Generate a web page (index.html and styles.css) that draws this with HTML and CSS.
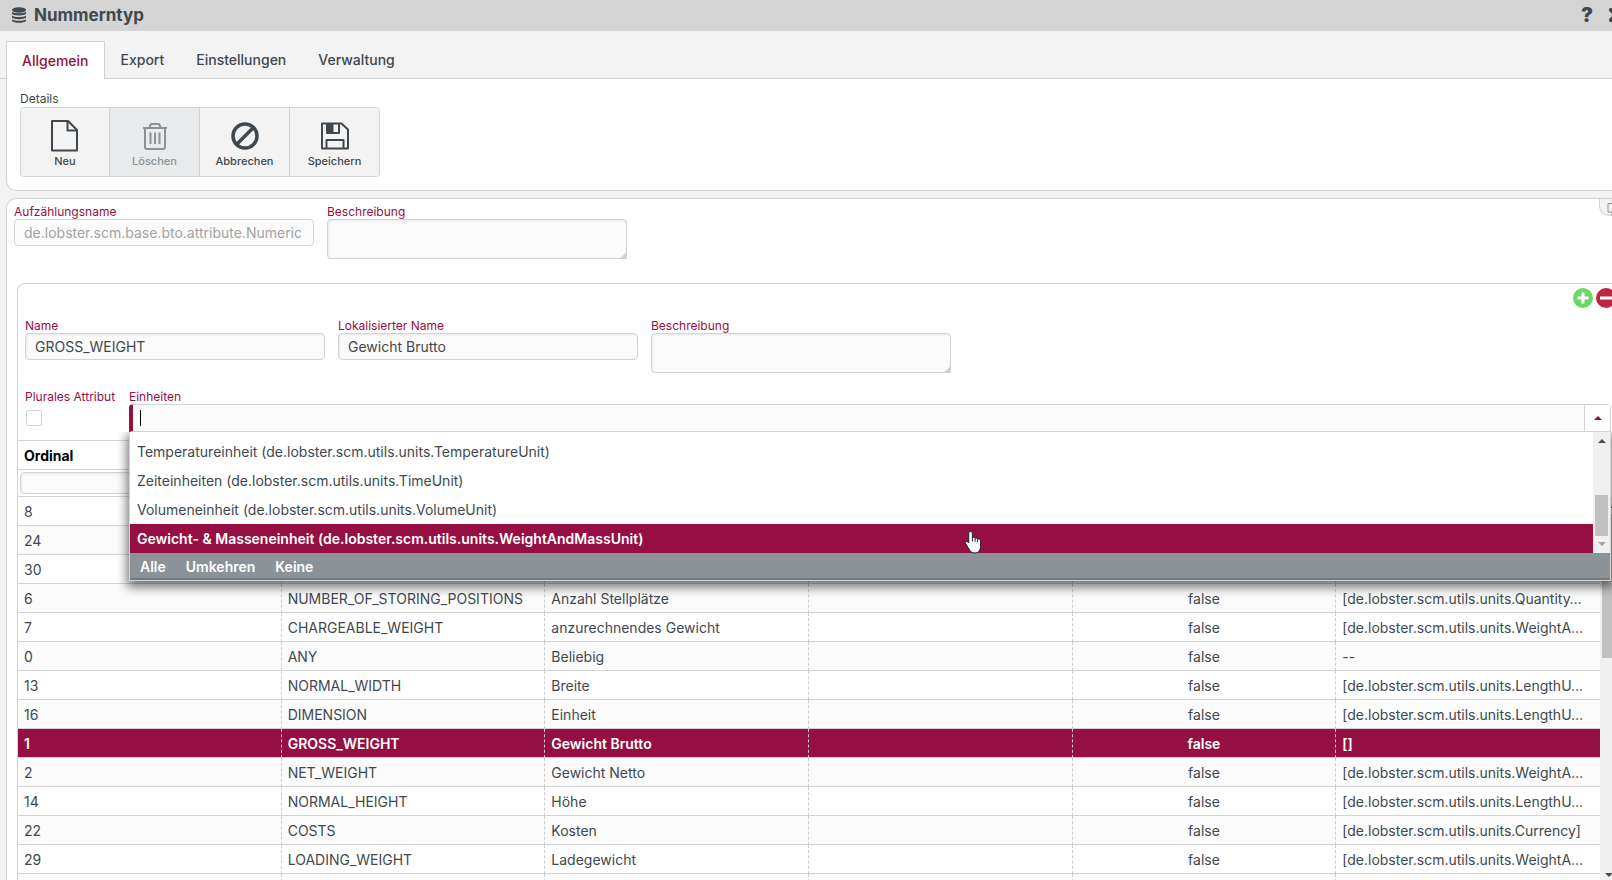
FILE: index.html
```html
<!DOCTYPE html>
<html lang="de">
<head>
  <meta charset="UTF-8">
  <meta name="viewport" content="width=device-width, initial-scale=1.0">
  <title>Nummerntyp</title>
  <link rel="stylesheet" href="styles.css">
</head>
<body>
<div class="window">
  <header class="titlebar">
    <svg class="db-icon" viewBox="0 0 14 16" width="14" height="16">
      <ellipse cx="7" cy="3" rx="7" ry="2.8"/>
      <path d="M0 4.800c2 2 12 2 14 0v2c-1.500 2.200-12.500 2.200-14 0zM0 8.500c2 2 12 2 14 0v2c-1.500 2.200-12.500 2.200-14 0zM0 12.200c2 2 12 2 14 0v1.500c-1.500 2.800-12.500 2.800-14 0z"/>
    </svg>
    <h1>Nummerntyp</h1>
    <button class="title-btn" aria-label="Hilfe">?</button>
    <button class="title-btn close" aria-label="Schließen">
      <svg viewBox="0 0 14 14" width="14" height="14"><path d="M2 2l10 10M12 2L2 12" stroke-width="4" stroke-linecap="round"/></svg>
    </button>
  </header>

  <nav class="tabs">
    <a href="#" class="tab active">Allgemein</a>
    <a href="#" class="tab">Export</a>
    <a href="#" class="tab">Einstellungen</a>
    <a href="#" class="tab">Verwaltung</a>
  </nav>

  <section class="toolbar">
    <div class="group-title">Details</div>
    <div class="btn-group">
      <button>
        <svg viewBox="0 0 34 34" width="34" height="34"><path d="M4 2h16l9 9v20.500h-25zM19.500 2v9.500h9.500" /></svg>
        Neu
      </button>
      <button disabled>
        <svg viewBox="0 0 34 34" width="34" height="34"><path d="M5 9h24M7 9h20v19q0 2-2 2h-16q-2 0-2-2zM11 9l2-4h8l2 4M12.500 13.500v11.500M17 13.500v11.500M21.500 13.500v11.500"/></svg>
        Löschen
      </button>
      <button>
        <svg viewBox="0 0 34 34" width="34" height="34"><circle cx="17" cy="17" r="12" stroke-width="3.500"/><path d="M8.500 25.500l17-17" stroke-width="3.500"/></svg>
        Abbrechen
      </button>
      <button>
        <svg viewBox="0 0 34 34" width="34" height="34"><path d="M4 4.500h19.500l6.500 6v19h-26zM9 4.500v9.500h12v-9.500M8.500 29.500v-8.500h17v8.500"/><path class="solid" d="M9 4h6.500v9.500H9z"/></svg>
        Speichern
      </button>
    </div>
  </section>

  <section class="content">
    <button class="corner-btn" aria-label="Ansicht">
      <svg viewBox="0 0 16 14" width="16" height="14"><path d="M1 1.500h14v8.500h-14zM4 12.500h8"/></svg>
    </button>

    <div class="fields">
      <div class="field">
        <label for="enumName">Aufzählungsname</label>
        <input id="enumName" type="text" value="de.lobster.scm.base.bto.attribute.NumericAttribute" disabled>
      </div>
      <div class="field">
        <label for="enumDesc">Beschreibung</label>
        <textarea id="enumDesc"></textarea>
      </div>
    </div>

    <div class="entry">
      <div class="entry-actions">
        <button aria-label="Hinzufügen"><svg viewBox="0 0 20 20" width="20" height="20"><circle cx="10" cy="10" r="10" fill="#6fd567"/><path d="M10 4.500v11M4.500 10h11"/></svg></button>
        <button aria-label="Entfernen"><svg viewBox="0 0 20 20" width="20" height="20"><circle cx="10" cy="10" r="10" fill="#be2742"/><path d="M4 10h12"/></svg></button>
      </div>

      <div class="fields">
        <div class="field">
          <label for="name">Name</label>
          <input id="name" type="text" value="GROSS_WEIGHT">
        </div>
        <div class="field">
          <label for="locName">Lokalisierter Name</label>
          <input id="locName" type="text" value="Gewicht Brutto">
        </div>
        <div class="field">
          <label for="desc">Beschreibung</label>
          <textarea id="desc"></textarea>
        </div>
      </div>

      <div class="fields units-row">
        <div class="field check">
          <label for="plural">Plurales Attribut</label>
          <input id="plural" type="checkbox">
        </div>
        <div class="field units">
          <label for="units">Einheiten</label>
          <div class="combo">
            <span class="caret"></span>
            <input id="units" type="text">
            <button class="combo-btn" aria-label="Liste schließen"><span class="arrow up"></span></button>
            <div class="dropdown">
              <div class="list-wrap">
                <ul class="options">
                  <li>Temperatureinheit (de.lobster.scm.utils.units.TemperatureUnit)</li>
                  <li>Zeiteinheiten (de.lobster.scm.utils.units.TimeUnit)</li>
                  <li>Volumeneinheit (de.lobster.scm.utils.units.VolumeUnit)</li>
                  <li class="selected">Gewicht- &amp; Masseneinheit (de.lobster.scm.utils.units.WeightAndMassUnit)
                    <svg class="pointer" viewBox="0 0 18 24" width="18" height="24"><path d="M6.500 1.500c1.200 0 1.900.7 1.900 1.800v4.200c1-.6 2.200-.3 2.700.6 1-.4 2-.1 2.500.8 1.700-.3 3 .4 3 2.100v5.500c0 3.500-2 6.500-5.600 6.500-3.400 0-4.600-1.500-6-4l-3.500-5.500c-.8-1.400.7-2.600 2-1.700l1.200 1.200V3.300c0-1.100.7-1.800 1.800-1.800z"/><path d="M8.400 7.500v4M11.100 8.200v3.500M13.600 9v3"/></svg>
                  </li>
                </ul>
                <div class="scrollbar">
                  <span class="arrow up"></span>
                  <div class="thumb"></div>
                  <span class="arrow down"></span>
                </div>
              </div>
              <div class="list-actions">
                <button>Alle</button>
                <button>Umkehren</button>
                <button>Keine</button>
              </div>
            </div>
          </div>
        </div>
      </div>

      <div class="grid">
        <table>
          <thead>
            <tr><th>Ordinal</th><th></th><th></th><th></th><th></th><th></th></tr>
            <tr class="filter"><td><input type="text" aria-label="Filter Ordinal"></td><td></td><td></td><td></td><td></td><td></td></tr>
          </thead>
          <tbody>
            <tr><td>8</td><td></td><td></td><td></td><td></td><td></td></tr>
            <tr><td>24</td><td></td><td></td><td></td><td></td><td></td></tr>
            <tr><td>30</td><td></td><td></td><td></td><td></td><td></td></tr>
            <tr><td>6</td><td>NUMBER_OF_STORING_POSITIONS</td><td>Anzahl Stellplätze</td><td></td><td>false</td><td>[de.lobster.scm.utils.units.Quantity…</td></tr>
            <tr><td>7</td><td>CHARGEABLE_WEIGHT</td><td>anzurechnendes Gewicht</td><td></td><td>false</td><td>[de.lobster.scm.utils.units.WeightA…</td></tr>
            <tr><td>0</td><td>ANY</td><td>Beliebig</td><td></td><td>false</td><td>--</td></tr>
            <tr><td>13</td><td>NORMAL_WIDTH</td><td>Breite</td><td></td><td>false</td><td>[de.lobster.scm.utils.units.LengthU…</td></tr>
            <tr><td>16</td><td>DIMENSION</td><td>Einheit</td><td></td><td>false</td><td>[de.lobster.scm.utils.units.LengthU…</td></tr>
            <tr class="selected"><td>1</td><td>GROSS_WEIGHT</td><td>Gewicht Brutto</td><td></td><td>false</td><td>[]</td></tr>
            <tr><td>2</td><td>NET_WEIGHT</td><td>Gewicht Netto</td><td></td><td>false</td><td>[de.lobster.scm.utils.units.WeightA…</td></tr>
            <tr><td>14</td><td>NORMAL_HEIGHT</td><td>Höhe</td><td></td><td>false</td><td>[de.lobster.scm.utils.units.LengthU…</td></tr>
            <tr><td>22</td><td>COSTS</td><td>Kosten</td><td></td><td>false</td><td>[de.lobster.scm.utils.units.Currency]</td></tr>
            <tr><td>29</td><td>LOADING_WEIGHT</td><td>Ladegewicht</td><td></td><td>false</td><td>[de.lobster.scm.utils.units.WeightA…</td></tr>
            <tr><td></td><td></td><td></td><td></td><td></td><td></td></tr>
          </tbody>
        </table>
        <div class="grid-scroll">
          <div class="scrollbar">
            <span class="arrow up"></span>
            <div class="thumb"></div>
            <span class="arrow down"></span>
          </div>
        </div>
      </div>
    </div>
  </section>
</div>
</body>
</html>
```
FILE: styles.css
```css
:root {
  --primary: #960f43;
  --text: #3f484e;
  --border: #d3d3d3;
  --bg: #f3f3f3;
  --field: #fbfbfb;
}

* {
  box-sizing: border-box;
}

body {
  margin: 0;
  height: 100vh;
  overflow: hidden;
  background: var(--bg);
  color: var(--text);
  font-family: Inter, "Liberation Sans", sans-serif;
  font-size: 14px;
}

button, input, textarea {
  font: inherit;
  color: inherit;
}

button {
  border: none;
  background: none;
  padding: 0;
  cursor: pointer;
}

/* the window runs a little below the visible area */
.window {
  display: flex;
  flex-direction: column;
  height: calc(100vh + 4px);
}

/* title bar */
.titlebar {
  flex: none;
  display: flex;
  align-items: center;
  height: 31px;
  padding: 0 0 2px 12px;
  background: #d4d4d4;
  overflow: hidden;
}

.db-icon {
  fill: var(--text);
}

.titlebar h1 {
  flex: 1;
  margin: 0 0 0 8px;
  font-size: 17px;
  font-weight: 700;
}

.title-btn {
  flex: none;
  width: 12px;
  font-size: 20px;
  font-weight: 900;
}

.title-btn.close {
  width: 14px;
  margin: 0 -11px 0 16px;
}

.title-btn svg {
  display: block;
  stroke: var(--text);
}

/* tabs */
.tabs {
  flex: none;
  display: flex;
  height: 48px;
  padding: 10px 0 0 6px;
  box-shadow: inset 0 -1px var(--border);
}

.tab {
  padding: 0 16px;
  line-height: 38px;
  font-weight: 500;
  color: var(--text);
  text-decoration: none;
}

.tab.active {
  padding: 0 15px;
  border: 1px solid var(--border);
  border-bottom: none;
  background: #fff;
  color: var(--primary);
}

/* toolbar */
.toolbar {
  flex: none;
  margin-left: 6px;
  padding: 12px 0 13px 13px;
  border: solid var(--border);
  border-width: 0 0 1px 1px;
  border-radius: 0 0 0 10px;
  background: #fff;
}

.group-title {
  line-height: 16px;
  font-size: 12px;
}

.btn-group {
  display: inline-flex;
  border: 1px solid var(--border);
  border-radius: 4px;
  overflow: hidden;
  vertical-align: top;
}

.btn-group button {
  display: flex;
  flex-direction: column;
  align-items: center;
  width: 90px;
  height: 68px;
  padding-top: 11px;
  background: var(--bg);
  font-size: 11px;
  font-weight: 500;
  line-height: 16px;
}

.btn-group button:first-child {
  width: 88px;
}

.btn-group button + button {
  border-left: 1px solid var(--border);
}

.btn-group button:disabled {
  background: #e8eaec;
  color: #8b9398;
}

.btn-group svg {
  fill: none;
  stroke: currentColor;
  stroke-width: 2;
  stroke-linejoin: round;
}

.btn-group .solid {
  fill: currentColor;
  stroke: none;
}

/* content */
.content {
  position: relative;
  flex: 1;
  min-height: 0;
  display: flex;
  flex-direction: column;
  margin: 7px 0 0 6px;
  padding: 6px 0 0 7px;
  border: solid var(--border);
  border-width: 1px 0 0 1px;
  border-radius: 10px 0 0 0;
  background: #fff;
}

.corner-btn {
  position: absolute;
  top: 0;
  right: 0;
  width: 13px;
  height: 17px;
  padding: 3px 0 0 7px;
  border: solid var(--border);
  border-width: 0 0 1px 1px;
  border-radius: 0 0 0 10px;
  background: var(--bg);
  overflow: hidden;
}

.corner-btn svg {
  display: block;
  fill: none;
  stroke: #8b9398;
}

.fields {
  flex: none;
  display: flex;
  align-items: flex-start;
  gap: 13px;
}

.field {
  display: flex;
  flex-direction: column;
  width: 300px;
}

.field label {
  line-height: 14px;
  font-size: 12px;
  color: var(--primary);
  white-space: nowrap;
}

.field input[type="text"],
.field textarea,
.filter input {
  width: 100%;
  height: 27px;
  padding: 0 9px;
  border: 1px solid var(--border);
  border-radius: 4px;
  background: var(--field);
  box-shadow: inset 1px 1px 3px rgba(0, 0, 0, 0.08);
  outline: none;
}

.field input[type="text"]:disabled {
  padding-right: 12px;
  color: #a3a3a3;
  box-shadow: none;
}

.field textarea {
  height: 40px;
  resize: none;
  background: linear-gradient(135deg, transparent 50%, var(--border) 50%) right bottom / 6px 6px no-repeat, var(--field);
  border-bottom-right-radius: 0;
}

/* one entry of the enumeration */
.entry {
  flex: 1;
  min-height: 0;
  display: flex;
  flex-direction: column;
  margin: 24px 0 0 3px;
  border: solid var(--border);
  border-width: 1px 0 0 1px;
  border-radius: 8px 0 0 0;
}

.entry > .fields {
  padding-left: 7px;
}

.entry-actions {
  flex: none;
  display: flex;
  justify-content: flex-end;
  align-items: flex-start;
  gap: 3px;
  height: 35px;
  margin-right: -4px;
  padding-top: 4px;
}

.entry-actions svg {
  display: block;
}

.entry-actions path {
  stroke: #fff;
  stroke-width: 3;
}

.units-row {
  margin-top: 17px;
}

.field.check {
  width: 91px;
}

.check input {
  appearance: none;
  width: 16px;
  height: 16px;
  margin: 6px 0 14px 1px;
  border: 1px solid var(--border);
  border-radius: 2px;
  background: #fff;
}

.field.units {
  flex: 1;
  margin-right: 1px;
}

/* combo box with open list */
.combo {
  position: relative;
  display: flex;
  align-items: center;
  height: 28px;
  border: 1px solid var(--border);
  border-left: 4px solid var(--primary);
  border-radius: 4px 4px 0 0;
  background: var(--field);
}

.caret {
  width: 1px;
  height: 16px;
  margin-left: 7px;
  background: #000;
}

.field .combo input {
  flex: 1;
  padding: 0;
  height: 26px;
  border: none;
  background: none;
  box-shadow: none;
}

.combo-btn {
  display: flex;
  align-items: center;
  justify-content: center;
  width: 26px;
  height: 26px;
  border-left: 1px solid var(--border);
  background: #fff;
  color: var(--primary);
}

.arrow {
  border: 4px solid transparent;
}

.arrow.up {
  border-top: none;
  border-bottom-color: currentColor;
}

.arrow.down {
  border-bottom: none;
  border-top-color: currentColor;
}

.dropdown {
  position: absolute;
  z-index: 2;
  top: calc(100% + 1px);
  left: -4px;
  right: -1px;
  border: 1px solid var(--border);
  border-top: none;
  background: #fff;
  box-shadow: 0 4px 10px 2px rgba(0, 0, 0, 0.55);
  clip-path: inset(0 -20px -20px -20px);
}

.list-wrap {
  display: flex;
}

.options {
  flex: 1;
  margin: 0;
  padding: 5px 0 0;
  list-style: none;
}

.options li {
  position: relative;
  height: 29px;
  padding-left: 7px;
  line-height: 30px;
}

.options .selected {
  background: var(--primary);
  color: #fff;
  font-weight: 600;
}

.pointer {
  position: absolute;
  left: 57%;
  top: 6px;
  fill: #fff;
  stroke: #1b1b2b;
}

.list-actions {
  display: flex;
  gap: 20px;
  height: 27px;
  padding: 2px 0 0 10px;
  border-bottom: 2px solid #737b80;
  background: #8b9399;
}

.list-actions button {
  color: #fff;
  font-weight: 600;
}

.scrollbar {
  flex: none;
  display: flex;
  flex-direction: column;
  align-items: center;
  width: 17px;
  padding: 7px 0;
  background: #f0f0f0;
  color: #4d4d4d;
}

.scrollbar .thumb {
  width: 13px;
  background: #c1c1c1;
}

.list-wrap .thumb {
  height: 41px;
  margin: auto 0 6px;
}

.list-wrap .down {
  color: #a3a3a3;
}

/* table */
.grid {
  flex: 1;
  min-height: 0;
  display: flex;
  align-items: stretch;
  overflow: hidden;
}

table {
  flex: 1;
  align-self: flex-start;
  width: 0;
  table-layout: fixed;
  border-collapse: separate;
  border-spacing: 0;
}

th, td {
  height: 29px;
  padding: 0 6px;
  border-bottom: 1px solid var(--border);
  text-align: left;
  white-space: nowrap;
  overflow: hidden;
}

th {
  height: 30px;
  border-top: 1px solid var(--border);
  color: #000;
}

.filter td {
  height: 27px;
  padding: 0 2px;
}

.filter input {
  display: block;
  height: 22px;
}

tbody tr:nth-child(even) {
  background: var(--field);
}

tbody td:not(:last-child) {
  border-right: 1px dashed #ccc;
}

tbody td:nth-child(5) {
  text-align: center;
}

tbody tr.selected {
  background: var(--primary);
  color: #fff;
  font-weight: 600;
}

.grid-scroll {
  flex: none;
  display: flex;
  width: 12px;
  padding-top: 57px;
  overflow: hidden;
}

.grid-scroll .thumb {
  height: 144px;
  margin: 6px 0 auto;
}
```
